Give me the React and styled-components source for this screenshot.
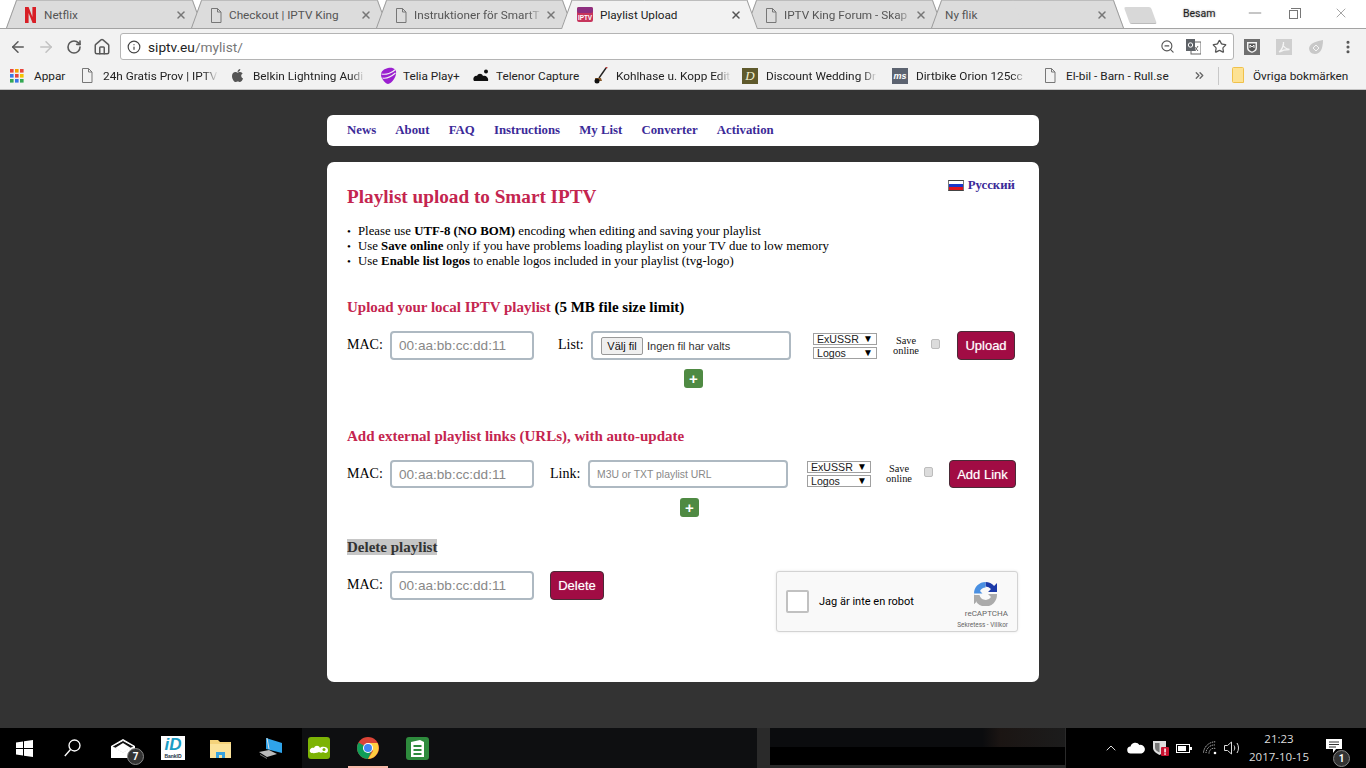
import React from "react";
import styled, { createGlobalStyle } from "styled-components";
import { ArrowLeft, ArrowRight, RotateCw, House, Info, ZoomOut, Star, X, Minus, ChevronUp, ChevronsRight, EllipsisVertical } from "lucide-react";
import { FaApple } from "react-icons/fa";

const Global = createGlobalStyle`
  html, body { margin: 0; padding: 0; background: #333; }
  * { box-sizing: border-box; }
`;
const UI = `"Roboto", "Liberation Sans", sans-serif`;
const SERIF = `"Liberation Serif", serif`;
const SANS = `"Liberation Sans", sans-serif`;

const Screen = styled.div`
  width: 1366px; height: 768px; overflow: hidden; display: flex; flex-direction: column;
`;
const TabStrip = styled.div`
  height: 29px; flex: none; display: flex; align-items: flex-start; padding-left: 6px; background: #fff;
  border-bottom: 1px solid #a3a3a3; font: 11.75px ${UI};
`;
const Tab = styled.div`
  position: relative; isolation: isolate; flex: none; width: ${p => p.$w || 197}px; height: ${p => p.$active ? 29 : 28}px;
  margin-left: ${p => p.$first ? 0 : -12}px; padding: ${p => p.$active ? 1 : 2}px 16px ${p => p.$active ? 1 : 0}px ${p => p.$pad || 19}px; display: flex; align-items: center;
  color: ${p => p.$active ? "#222" : "#555"}; z-index: ${p => p.$active ? 3 : 1};
  &::before, &::after {
    content: ""; position: absolute; z-index: -1; top: 0; bottom: 0; width: 52%;
    background: ${p => p.$active ? "#f2f2f2" : "#dcdcdc"}; border-top: 1px solid #bdbdbd;
  }
  &::before { left: 0; transform-origin: bottom; transform: skewX(-20deg); border-left: 1px solid #9b9b9b; }
  &::after { right: 0; transform-origin: bottom; transform: skewX(20deg); border-right: 1px solid #9b9b9b; }
`;
const TabIcon = styled.span`
  flex: none; width: ${p => p.$w || 19}px; display: flex; align-items: center; margin-left: ${p => p.$shift || 0}px;
`;
const TabLabel = styled.span`
  flex: 1; min-width: 0; overflow: hidden; white-space: nowrap; line-height: 16px;
  ${p => p.$fade && `mask-image: linear-gradient(to right, #000 calc(100% - 16px), transparent);`}
`;
const TabClose = styled.span`
  flex: none; width: 12px; margin-left: 2px; display: flex; color: ${p => p.$active ? "#555" : "#777"};
`;
const NewTab = styled.div`
  flex: none; width: 27px; height: 17px; margin: 7px 0 0 6px; background: #d8d8d8; transform-origin: bottom;
  transform: skewX(20deg); border-bottom: 1px solid #bbb; border-radius: 2px;
`;
const Profile = styled.span`
  margin: 7px 0 0 26px; font: 10.5px/14px ${UI}; color: #1c1c1c; text-shadow: 0 0 2px #888;
`;
const WindowControls = styled.div`
  margin-left: auto; padding-right: 2px; display: flex; height: 26px; color: #777;
`;
const WinButton = styled.span`
  width: ${p => p.$w}px; display: flex; align-items: center; justify-content: center;
`;
const RestoreGlyph = styled.span`
  width: 9px; height: 9px; border: 1px solid #777; position: relative; margin: 2px 3px 0 0;
  &::after { content: ""; position: absolute; left: 1px; top: -3px; width: 9px; height: 9px; border-top: 1px solid #777; border-right: 1px solid #777; }
`;

const Toolbar = styled.div`
  height: 32px; flex: none; background: #f2f2f2; display: flex; align-items: flex-start; padding: 4px 2px 0 4px;
`;
const NavSlot = styled.span`
  width: 28px; height: 27px; flex: none; display: flex; align-items: center; justify-content: center; color: ${p => p.$off ? "#c2c2c2" : "#5a5a5a"};
`;
const AddressBar = styled.div`
  flex: 1; height: 27px; margin-left: 4px; background: #fff; border: 1px solid #b4b4b4; border-radius: 3px;
  display: flex; align-items: center; padding: 0 6px; font: 13.7px ${UI}; color: #222;
`;
const UrlPath = styled.span` color: #777; `;
const UrlText = styled.span` margin-left: 7px; flex: 1; `;
const BarIcons = styled.span` display: flex; gap: 11px; align-items: center; color: #555; `;
const ExtSlot = styled.span`
  width: 32px; height: 27px; flex: none; display: flex; align-items: center; justify-content: center; color: #555;
`;
const ExtGroup = styled.div` display: flex; margin-left: 2px; `;

const Bookmarks = styled.div`
  height: 29px; flex: none; background: #f2f2f2; display: flex; align-items: center; padding: 1px 0 0 10px;
  font: 11.8px ${UI}; color: #222; border-bottom: 1px solid #c4c4c4;
`;
const Mark = styled.div`
  flex: none; width: ${p => p.$w}px; display: flex; align-items: center;
`;
const MarkIcon = styled.span`
  flex: none; width: ${p => p.$w || 24}px; display: flex; align-items: center;
`;
const MarkLabel = styled.span`
  flex: none; width: ${p => p.$w}px; overflow: hidden; white-space: nowrap; line-height: 16px;
  ${p => p.$fade && `mask-image: linear-gradient(to right, #000 calc(100% - 14px), transparent);`}
`;
const MarkDivider = styled.span` width: 1px; height: 18px; background: #c8c8c8; flex: none; margin: 0 13px 0 6px; `;
const More = styled.span` flex: none; width: 19px; display: flex; color: #666; margin-left: 7px; `;

const Page = styled.main`
  flex: 1; min-height: 0; background: #333; display: flex; flex-direction: column; align-items: center; padding-top: 25px;
`;
const NavPanel = styled.nav`
  width: 712px; height: 31px; flex: none; background: #fff; border-radius: 6px; display: flex; align-items: center; gap: 19.2px; padding: 0 20px;
`;
const NavLink = styled.a`
  font: bold 12.8px/15px ${SERIF}; color: #3b2a98; text-decoration: none;
`;
const Panel = styled.section`
  width: 712px; height: 520px; flex: none; margin-top: 16px; background: #fff; border-radius: 7px; padding: 0 21px 0 20px;
  display: flex; flex-direction: column; font-family: ${SERIF};
`;
const Head = styled.header`
  height: 46px; flex: none; display: flex; justify-content: space-between; align-items: flex-start;
`;
const Title = styled.h1`
  margin: 24px 0 0; font: bold 19.2px/22px ${SERIF}; color: #c4254f;
`;
const Lang = styled.a`
  margin: 16px 3px 0 0; display: flex; align-items: center; gap: 4px; font: bold 12.8px/15px ${SERIF}; color: #3b2a98;
`;
const Flag = styled.span`
  width: 16px; height: 11px; display: block; border: 1px solid #444; border-left-color: #777; border-right-color: #777;
  background: linear-gradient(#fff 0 33%, #1a36c8 33% 66%, #e0141c 66%);
`;
const Notes = styled.ul`
  list-style: none; margin: 16px 0 0; padding: 0; font-size: 12.8px; line-height: 15px; color: #000;
`;
const Note = styled.li`
  padding-left: 11px; position: relative;
  &::before { content: "•"; position: absolute; left: 0; font-size: 11px; }
`;
const Heading = styled.h2`
  margin: ${p => p.$top}px 0 0; font: bold 15px/18px ${SERIF}; color: #c4254f;
`;
const Limit = styled.span` color: #000; `;
const DeleteHeading = styled.h2`
  margin: 22px 0 0; width: fit-content; height: 16px; background: #c6c6c6; font: bold 15px/16px ${SERIF}; color: #333;
`;
const Row = styled.div`
  margin-top: ${p => p.$top || 15}px; height: ${p => p.$h || 29}px; flex: none; display: flex; align-items: flex-start;
`;
const Label = styled.label`
  flex: none; width: ${p => p.$w}px; font: 14px/${p => p.$lh || 28}px ${SERIF}; color: #000; margin-left: ${p => p.$left || 0}px;
`;
const TextBox = styled.input`
  flex: none; width: ${p => p.$w}px; height: 100%; border: 2px solid #aeb9c2; border-radius: 4px; padding: 0 7px; outline: none; background: #fff;
  font: ${p => p.$small ? "10.4px" : "13.6px"} ${SANS};
  &::placeholder { color: #888; opacity: 1; }
`;
const FileBox = styled.div`
  flex: none; width: 200px; height: 100%; border: 2px solid #aeb9c2; border-radius: 4px; padding: 0 8px; display: flex; align-items: center; gap: 4px;
  font: 11px ${SANS}; color: #333;
`;
const FileButton = styled.button`
  flex: none; width: 42px; height: 18px; padding: 0; border: 1px solid #999; border-radius: 2px; background: #efefef; font: 11px ${SANS}; color: #111;
`;
const Selects = styled.div`
  flex: none; width: 64px; margin-left: ${p => p.$left}px; padding-top: ${p => p.$top || 2}px; display: flex; flex-direction: column; gap: 2px;
`;
const Select = styled.div`
  height: 12px; border: 1px solid #a0a0a0; display: flex; align-items: center; justify-content: space-between; padding: 0 3px;
  font: 10.6px/10px ${SANS}; color: #222; background: #fff;
`;
const Caret = styled.span` font-size: 10px; color: #000; `;
const Save = styled.span`
  flex: none; width: 26px; margin-left: ${p => p.$left}px; padding-top: ${p => p.$top}px; text-align: center; font: 10.4px/10px ${SERIF}; color: #111;
`;
const Check = styled.input.attrs({ type: "checkbox" })`
  appearance: none; flex: none; width: 9px; height: 10px; margin: ${p => p.$top}px 0 0 ${p => p.$left}px; background: #dcdcdc; border: 1px solid #bdbdbd; border-radius: 2px;
`;
const Action = styled.button`
  flex: none; width: ${p => p.$w}px; height: 100%; margin-left: ${p => p.$left}px; background: #a10c44; border: 1px solid #4a2a36; border-radius: 4px; padding: 0;
  color: #fff; font: 13px ${SANS}; text-shadow: 0 0 1px #fff8;
`;
const Plus = styled.button`
  flex: none; align-self: flex-start; width: 19px; height: 19px; margin: ${p => p.$top}px 0 0 ${p => p.$left}px; padding: 0; border: none; border-radius: 3px; background: #4f8a43;
  color: #fff; font: bold 15px/18px ${SANS};
`;
const Captcha = styled.div`
  flex: none; margin-left: auto; width: 242px; height: 61px; background: #f9f9f9; border: 1px solid #d3d3d3; border-radius: 3px; padding: 0 9px;
  display: flex; align-items: center; box-shadow: 0 0 3px #0000001a;
`;
const CaptchaBox = styled.span`
  flex: none; width: 23px; height: 23px; background: #fff; border: 2px solid #c1c1c1; border-radius: 2px;
`;
const CaptchaText = styled.span`
  flex: 1; margin-left: 10px; font: 11px ${UI}; color: #000;
`;
const CaptchaBrand = styled.div`
  flex: none; width: 56px; display: flex; flex-direction: column; align-items: flex-end; padding-top: 6px; color: #666;
`;
const CaptchaLogo = styled.span` display: flex; margin-right: 10px; `;
const CaptchaName = styled.span` font: 8px/10px ${UI}; margin-top: 3px; `;
const CaptchaLinks = styled.span` font: 6.4px/8px ${UI}; margin-top: 2px; white-space: nowrap; `;

const Taskbar = styled.footer`
  height: 40px; flex: none; background: #000; display: flex;
`;
const TaskGroup = styled.div`
  flex: none; width: ${p => p.$w}px; display: flex; align-items: center; background: ${p => p.$bg || "#000"};
`;
const TaskSlot = styled.span`
  flex: none; width: ${p => p.$w}px; height: 100%; display: flex; align-items: center; justify-content: center; position: relative;
  padding-bottom: ${p => p.$lift || 0}px;
`;
const Badge = styled.span`
  position: absolute; top: ${p => p.$top}px; left: ${p => p.$left}px; width: 17px; height: 17px; border-radius: 50%; background: #333; border: 1px solid #888; color: #fff;
  font: bold 10px/15px ${UI}; text-align: center;
`;
const RunLine = styled.span`
  position: absolute; left: 12px; bottom: 0; width: 40px; height: 2px; background: #f6b8a8;
`;
const Strip = styled.div` flex: none; width: 12px; background: #2a2a2a; `;
const Thumb = styled.div`
  flex: none; width: 297px; display: flex; flex-direction: column; border: 1px solid #2a2a2a; border-top: none; border-bottom-width: 3px;
`;
const ThumbTop = styled.div` height: 19px; background: linear-gradient(to right, #0b0c0e 0 72%, #1b1513 78%, #1c1c1c); `;
const ThumbLow = styled.div` flex: 1; background: #000; `;
const Clock = styled.div`
  flex: none; width: 72px; text-align: center; color: #ddd; font: 11.5px/18px "Open Sans", ${UI}; padding-bottom: 1px;
`;

const Doc = () => (
  <svg width="12" height="15" viewBox="0 0 12 15" fill="none" stroke="#777" strokeWidth="1">
    <path d="M1.5.5h6l3.5 3.5v10.5h-9.5z M7.5.5v3.5h3.5" />
  </svg>
);
const NetflixN = () => (
  <svg width="11" height="16" viewBox="0 0 11 16"><path d="M0 0h3.6l3.8 10V0H11v16H7.6L3.6 6v10H0z" fill="#d81f26" /></svg>
);
const SmartFav = () => (
  <svg width="16" height="15" viewBox="0 0 16 15">
    <rect width="16" height="15" rx="2" fill="#c7355c" /><rect y="0" width="16" height="6" rx="2" fill="#8e2f80" />
    <text x="8" y="12.5" fontSize="6.4" fontFamily="Liberation Sans" fontWeight="700" fill="#fff" textAnchor="middle">IPTV</text>
  </svg>
);
const AppsGrid = () => (
  <svg width="14" height="14" viewBox="0 0 14 14">
    {["#e8453c", "#f4a300", "#e8453c", "#3b78e7", "#e8453c", "#f4c300", "#34a853", "#3b78e7", "#34a853"].map((c, i) => (
      <rect key={i} x={(i % 3) * 5} y={Math.floor(i / 3) * 5} width="3.6" height="3.6" fill={c} />
    ))}
  </svg>
);
const Telia = () => (
  <svg width="17" height="18" viewBox="0 0 17 18">
    <path d="M8 1C13 0 17 2 16 7c-1 6-6 10-8 10S1 12 1 8s3-6 7-7z" fill="#9b1fd0" />
    <path d="M1.5 7C6 8 12 6 15.500 2.500M2.500 11C7 12 12 9 15.500 6" stroke="#f2f2f2" strokeWidth="1.100" fill="none" />
  </svg>
);
const Telenor = () => (
  <svg width="17" height="13" viewBox="0 0 17 13">
    <path d="M1 12c-2-3 1-6 3-5 1-3 5-3 6 0 3-1 6 2 5 5z" fill="#111" /><circle cx="13" cy="2.500" r="2" fill="#111" />
  </svg>
);
const Mower = () => (
  <svg width="15" height="17" viewBox="0 0 15 17">
    <path d="M13 1L6 11" stroke="#222" strokeWidth="1.400" /><path d="M2 11h6l1 3H2z" fill="#8a5a2a" /><circle cx="4" cy="14" r="2.500" fill="#111" />
    <path d="M13 1l1-1" stroke="#b33" strokeWidth="2" />
  </svg>
);
const WeddingD = styled.span`
  width: 16px; height: 16px; background: #5f5a2c; color: #f4f0d0; font: italic 13px/16px ${SERIF}; text-align: center; display: block;
`;
const MsBox = styled.span`
  width: 16px; height: 16px; background: #5c6370; color: #fff; font: italic bold 9px/16px ${SANS}; text-align: center; display: block;
`;
const Folder = () => (
  <svg width="12" height="17" viewBox="0 0 12 17">
    <path d="M.5 1.500a1 1 0 011-1h9a1 1 0 011 1v14h-10a1 1 0 01-1-1z" fill="#fde293" stroke="#f0c14b" />
  </svg>
);
const Translate = () => (
  <svg width="15" height="16" viewBox="0 0 15 16">
    <rect x="5" y="3" width="10" height="12" fill="#fff" stroke="#666" />
    <rect x="0" y="0" width="9" height="12" fill="#5f6368" />
    <circle cx="4.500" cy="6" r="2.200" fill="none" stroke="#fff" />
    <path d="M8 7l4 5m0-5l-3 5" stroke="#666" fill="none" />
  </svg>
);
const ShieldExt = () => (
  <svg width="16" height="16" viewBox="0 0 16 16">
    <rect width="16" height="16" fill="#6f6f6f" />
    <path d="M3 3h10v6c0 3-3 4-5 5-2-1-5-2-5-5z" fill="#f2f2f2" /><path d="M4.500 4.500h7v4.500c0 2-2 3-3.500 3.500-1.500-.5-3.500-1.500-3.500-3.500z" fill="#555" />
    <path d="M6 9V6l2 2 2-2v3" stroke="#fff" strokeWidth=".9" fill="none" />
  </svg>
);
const PdfExt = () => (
  <svg width="16" height="16" viewBox="0 0 16 16">
    <rect width="16" height="16" fill="#cfcfcf" />
    <path d="M3 13c3-2 5-7 4.500-10M7 5c.5 3 3 5 6.500 5.500-3 0-7 .5-10 2.500" stroke="#f4f4f4" strokeWidth="1.300" fill="none" />
  </svg>
);
const DropExt = () => (
  <svg width="16" height="16" viewBox="0 0 16 16">
    <path d="M15 1c0 9-3 14-8 14-4 0-6-3-6-6 1-5 8-7 14-8z" fill="#c8c8c8" />
    <path d="M5 9l3-3 3 3-3 3z" fill="none" stroke="#f4f4f4" />
  </svg>
);
const RecaptchaLogo = () => (
  <svg width="25" height="25" viewBox="0 0 25 25">
    <path d="M12.500 1a11.500 11.500 0 018.600 3.900L24 2v9h-9l3-3a7 7 0 00-5.500-2.500z" fill="#1c3aa9" />
    <path d="M12.500 1v5.500A6.500 6.500 0 007 10l2.500 2.500H1V12.500A11.500 11.500 0 0112.500 1z" fill="#4a90e2" />
    <path d="M1 14h5.500A6.300 6.300 0 0018 16l-3-3h9v1A11.500 11.500 0 011 14z M1 14v9l3-3" fill="#ababab" />
    <path d="M1 13.500v9.500l6-6z" fill="#ababab" />
  </svg>
);
const WinLogo = () => (
  <svg width="17" height="17" viewBox="0 0 17 17" fill="#fff">
    <path d="M0 2.500l7-1v6.500H0zM8 1.300L17 0v8H8zM0 9h7v6.500l-7-1zM8 9h9v8l-9-1.300z" />
  </svg>
);
const SearchIcon = () => (
  <svg width="17" height="18" viewBox="0 0 17 18" fill="none" stroke="#fff" strokeWidth="1.300">
    <circle cx="10.500" cy="6.500" r="5.500" /><path d="M6.500 10.500L.8 17" />
  </svg>
);
const MailIcon = () => (
  <svg width="24" height="19" viewBox="0 0 24 19">
    <path d="M0 7L12 0l12 7v12H0z" fill="#fff" /><path d="M1 7.500l11 6 11-6-11-6z" fill="#111" stroke="#fff" />
    <path d="M4 9l8 4.500L20 9l-8-5z" fill="#fff" />
  </svg>
);
const BankIdBox = styled.span`
  width: 24px; height: 24px; background: #fff; display: flex; flex-direction: column; align-items: center; justify-content: flex-end; overflow: hidden;
`;
const BankIdMark = styled.span` font: italic bold 17px/16px ${SANS}; color: #1b9cc4; `;
const BankIdName = styled.span` font: bold 5px/7px ${SANS}; color: #234; `;
const FolderIcon = () => (
  <svg width="21" height="19" viewBox="0 0 21 19">
    <path d="M0 1h8l2 2h11v16H0z" fill="#f4d27a" /><path d="M0 5h21v14H0z" fill="#fbe29a" />
    <path d="M6 19v-6h9v6h-3v-3H9v3z" fill="#38a3e0" />
  </svg>
);
const LaptopIcon = () => (
  <svg width="23" height="23" viewBox="0 0 23 23">
    <path d="M7 1l16 5v10L7 12z" fill="#2fa4ea" /><path d="M8 1l2 11" stroke="#ddd" />
    <path d="M0 15l10-2 8 4-10 3z" fill="#bbb" /><path d="M1 17l7 4 0 1-7-4z" fill="#777" />
  </svg>
);
const CloudApp = () => (
  <svg width="22" height="22" viewBox="0 0 22 22">
    <rect width="22" height="22" rx="3" fill="#7cb305" />
    <path d="M2 15c-1-3 2-5 4-4 1-3 5-3 6 0 1-2 8-2 8 2s-4 3-5 2c-1 1-3 1-4 0-2 1-7 2-9 0z" fill="#fff" />
    <circle cx="16" cy="12.500" r="1.500" fill="#7cb305" />
  </svg>
);
const ChromeIcon = () => (
  <svg width="22" height="22" viewBox="0 0 22 22">
    <circle cx="11" cy="11" r="11" fill="#db4437" />
    <path d="M11 11L1.500 5.500A11 11 0 0011 22l5-11z" fill="#0f9d58" />
    <path d="M11 6h9.500A11 11 0 0111 22l5-8z" fill="#ffcd40" />
    <circle cx="11" cy="11" r="5" fill="#fff" /><circle cx="11" cy="11" r="4" fill="#4285f4" />
  </svg>
);
const GreenApp = () => (
  <svg width="23" height="23" viewBox="0 0 23 23">
    <rect width="23" height="23" rx="3" fill="#2e8b3d" />
    <path d="M5 5l9-2 4 2v15H5z" fill="#fff" /><path d="M7.500 8h8v2h-8zm0 4h8v2h-8zm0 4h8v2h-8z" fill="#2e8b3d" />
  </svg>
);
const TrayCloud = () => (
  <svg width="18" height="12" viewBox="0 0 18 12"><path d="M4 11.500a3.500 3.500 0 01-.5-7A5 5 0 0112.500 3 4 4 0 0114.500 11.500z" fill="#fff" /></svg>
);
const TrayShield = () => (
  <svg width="16" height="16" viewBox="0 0 16 16">
    <path d="M0 1h13v7c0 3-3 5-6.500 7C3 13 0 11 0 8z" fill="#ddd" /><path d="M2 3h4.500v9.500C4 11 2 10 2 7.500z" fill="#777" />
    <rect x="8" y="7" width="8" height="9" rx="1" fill="#c8102e" /><rect x="11.300" y="8.500" width="1.500" height="4" fill="#fff" /><rect x="11.300" y="13.300" width="1.500" height="1.500" fill="#fff" />
  </svg>
);
const TrayBattery = () => (
  <svg width="16" height="9" viewBox="0 0 16 9"><rect x=".5" y=".5" width="13" height="8" fill="none" stroke="#fff" /><rect x="2" y="2" width="8" height="5" fill="#fff" /><rect x="14" y="3" width="2" height="3" fill="#fff" /></svg>
);
const TrayWifi = () => (
  <svg width="15" height="14" viewBox="0 0 15 14" fill="none" stroke="#ccc" strokeWidth="1">
    <path d="M.5 11.500A12 12 0 0112.500.8M3 12A8.500 8.500 0 0112.500 4M6 12.500A5 5 0 0112.500 7.500" strokeDasharray="1.200 .8" /><circle cx="12" cy="12" r="1.300" fill="#fff" stroke="none" />
  </svg>
);
const TrayVolume = () => (
  <svg width="17" height="14" viewBox="0 0 17 14" fill="none" stroke="#ddd" strokeWidth="1">
    <path d="M.5 4.500h3l4-3.500v12l-4-3.500h-3z M10 4.500c1 1.500 1 3.500 0 5 M13 2c2 3 2 7 0 10" />
  </svg>
);
const TrayNote = () => (
  <svg width="16" height="14" viewBox="0 0 16 14">
    <path d="M0 0h16v10h-6l-3 4v-4H0z" fill="#fff" /><path d="M3 3h10M3 5.500h10M3 8h7" stroke="#333" />
  </svg>
);

const tabs = [
  { label: "Netflix", icon: <NetflixN />, first: true },
  { label: "Checkout | IPTV King", icon: <Doc /> },
  { label: "Instruktioner för SmartT", icon: <Doc />, fade: true },
  { label: "Playlist Upload", icon: <SmartFav />, active: true, shift: -3, iw: 23 },
  { label: "IPTV King Forum - Skap", icon: <Doc />, fade: true },
  { label: "Ny flik", pad: 14, w: 193 },
];
const marks = [
  { label: "Appar", icon: <AppsGrid />, w: 71, tw: 40 },
  { label: "24h Gratis Prov | IPTV", icon: <Doc />, w: 149, tw: 115, fade: true, iw: 22 },
  { label: "Belkin Lightning Audi", icon: <FaApple size={15} color="#555" />, w: 150, tw: 112, fade: true, iw: 23 },
  { label: "Telia Play+", icon: <Telia />, w: 93, tw: 62, iw: 23 },
  { label: "Telenor Capture", icon: <Telenor />, w: 120, tw: 90, iw: 23 },
  { label: "Kohlhase u. Kopp Edit", icon: <Mower />, w: 149, tw: 115, fade: true, iw: 23 },
  { label: "Discount Wedding Dr", icon: <WeddingD>D</WeddingD>, w: 150, tw: 111, fade: true },
  { label: "Dirtbike Orion 125cc", icon: <MsBox>ms</MsBox>, w: 152, tw: 110, fade: true },
  { label: "El-bil - Barn - Rull.se", icon: <Doc />, w: 142, tw: 114, iw: 22 },
];
const nav = ["News", "About", "FAQ", "Instructions", "My List", "Converter", "Activation"];

const Pickers = ({ left, top }) => (
  <Selects $left={left} $top={top}>
    <Select>ExUSSR<Caret>▼</Caret></Select>
    <Select>Logos<Caret>▼</Caret></Select>
  </Selects>
);

export default function App() {
  return (
    <Screen>
      <Global />
      <TabStrip>
        {tabs.map(t => (
          <Tab key={t.label} $active={t.active} $first={t.first} $pad={t.pad} $w={t.w}>
            {t.icon && <TabIcon $shift={t.shift} $w={t.iw}>{t.icon}</TabIcon>}
            <TabLabel $fade={t.fade}>{t.label}</TabLabel>
            <TabClose $active={t.active}><X size={12} strokeWidth={3} /></TabClose>
          </Tab>
        ))}
        <NewTab />
        <Profile>Besam</Profile>
        <WindowControls>
          <WinButton $w={34}><Minus size={20} strokeWidth={1} /></WinButton>
          <WinButton $w={46}><RestoreGlyph /></WinButton>
          <WinButton $w={46}><X size={16} strokeWidth={1} /></WinButton>
        </WindowControls>
      </TabStrip>
      <Toolbar>
        <NavSlot><ArrowLeft size={18} strokeWidth={2} /></NavSlot>
        <NavSlot $off><ArrowRight size={18} strokeWidth={2} /></NavSlot>
        <NavSlot><RotateCw size={16} strokeWidth={2.4} /></NavSlot>
        <NavSlot><House size={18} strokeWidth={2} /></NavSlot>
        <AddressBar>
          <Info size={14} strokeWidth={2} color="#444" />
          <UrlText>siptv.eu<UrlPath>/mylist/</UrlPath></UrlText>
          <BarIcons>
            <ZoomOut size={15} strokeWidth={1.8} />
            <Translate />
            <Star size={15} strokeWidth={2} />
          </BarIcons>
        </AddressBar>
        <ExtGroup>
          <ExtSlot><ShieldExt /></ExtSlot>
          <ExtSlot><PdfExt /></ExtSlot>
          <ExtSlot><DropExt /></ExtSlot>
          <ExtSlot><EllipsisVertical size={16} strokeWidth={2.6} /></ExtSlot>
        </ExtGroup>
      </Toolbar>
      <Bookmarks>
        {marks.map(m => (
          <Mark key={m.label} $w={m.w}>
            <MarkIcon $w={m.iw}>{m.icon}</MarkIcon>
            <MarkLabel $w={m.tw} $fade={m.fade}>{m.label}</MarkLabel>
          </Mark>
        ))}
        <More><ChevronsRight size={13} strokeWidth={2.5} /></More>
        <MarkDivider />
        <MarkIcon $w={21}><Folder /></MarkIcon>
        <MarkLabel $w={100}>Övriga bokmärken</MarkLabel>
      </Bookmarks>
      <Page>
        <NavPanel>
          {nav.map(n => <NavLink key={n}>{n}</NavLink>)}
        </NavPanel>
        <Panel>
          <Head>
            <Title>Playlist upload to Smart IPTV</Title>
            <Lang><Flag />Русский</Lang>
          </Head>
          <Notes>
            <Note>Please use <b>UTF-8 (NO BOM)</b> encoding when editing and saving your playlist</Note>
            <Note>Use <b>Save online</b> only if you have problems loading playlist on your TV due to low memory</Note>
            <Note>Use <b>Enable list logos</b> to enable logos included in your playlist (tvg-logo)</Note>
          </Notes>
          <Heading $top={29}>Upload your local IPTV playlist <Limit>(5 MB file size limit)</Limit></Heading>
          <Row>
            <Label $w={43}>MAC:</Label>
            <TextBox $w={144} placeholder="00:aa:bb:cc:dd:11" />
            <Label $w={33} $left={24}>List:</Label>
            <FileBox><FileButton>Välj fil</FileButton>Ingen fil har valts</FileBox>
            <Pickers left={22} />
            <Save $left={16} $top={5}>Save online</Save>
            <Check $left={12} $top={8} />
            <Action $w={58} $left={17}>Upload</Action>
          </Row>
          <Plus $top={9} $left={337}>+</Plus>
          <Heading $top={39}>Add external playlist links (URLs), with auto-update</Heading>
          <Row $h={28}>
            <Label $w={43} $lh={27}>MAC:</Label>
            <TextBox $w={144} placeholder="00:aa:bb:cc:dd:11" />
            <Label $w={38} $left={16} $lh={27}>Link:</Label>
            <TextBox $w={200} $small placeholder="M3U or TXT playlist URL" />
            <Pickers left={19} top={1} />
            <Save $left={15} $top={4}>Save online</Save>
            <Check $left={12} $top={7} />
            <Action $w={67} $left={16}>Add Link</Action>
          </Row>
          <Plus $top={10} $left={333}>+</Plus>
          <DeleteHeading>Delete playlist</DeleteHeading>
          <Row $top={16} $h={29}>
            <Label $w={43}>MAC:</Label>
            <TextBox $w={144} placeholder="00:aa:bb:cc:dd:11" />
            <Action $w={54} $left={16}>Delete</Action>
            <Captcha>
              <CaptchaBox />
              <CaptchaText>Jag är inte en robot</CaptchaText>
              <CaptchaBrand>
                <CaptchaLogo><RecaptchaLogo /></CaptchaLogo>
                <CaptchaName>reCAPTCHA</CaptchaName>
                <CaptchaLinks>Sekretess - Villkor</CaptchaLinks>
              </CaptchaBrand>
            </Captcha>
          </Row>
        </Panel>
      </Page>
      <Taskbar>
        <TaskGroup $w={302}>
          <TaskSlot $w={48}><WinLogo /></TaskSlot>
          <TaskSlot $w={48}><SearchIcon /></TaskSlot>
          <TaskSlot $w={54}><MailIcon /><Badge $top={20} $left={31}>7</Badge></TaskSlot>
          <TaskSlot $w={46}>
            <BankIdBox><BankIdMark>iD</BankIdMark><BankIdName>BankID</BankIdName></BankIdBox>
          </TaskSlot>
          <TaskSlot $w={48}><FolderIcon /></TaskSlot>
          <TaskSlot $w={52}><LaptopIcon /></TaskSlot>
        </TaskGroup>
        <TaskGroup $w={455} $bg="#0e0f11">
          <TaskSlot $w={34}><CloudApp /></TaskSlot>
          <TaskSlot $w={64}><ChromeIcon /><RunLine /></TaskSlot>
          <TaskSlot $w={34}><GreenApp /></TaskSlot>
        </TaskGroup>
        <Strip />
        <Thumb><ThumbTop /><ThumbLow /></Thumb>
        <TaskGroup $w={300}>
          <TaskSlot $w={37} />
          <TaskSlot $w={16}><ChevronUp size={16} color="#eee" strokeWidth={1.4} /></TaskSlot>
          <TaskSlot $w={34}><TrayCloud /></TaskSlot>
          <TaskSlot $w={16}><TrayShield /></TaskSlot>
          <TaskSlot $w={30}><TrayBattery /></TaskSlot>
          <TaskSlot $w={22}><TrayWifi /></TaskSlot>
          <TaskSlot $w={22}><TrayVolume /></TaskSlot>
          <Clock>21:23<br />2017-10-15</Clock>
          <TaskSlot $w={38} $lift={4}><TrayNote /><Badge $top={22} $left={18}>1</Badge></TaskSlot>
        </TaskGroup>
      </Taskbar>
    </Screen>
  );
}
